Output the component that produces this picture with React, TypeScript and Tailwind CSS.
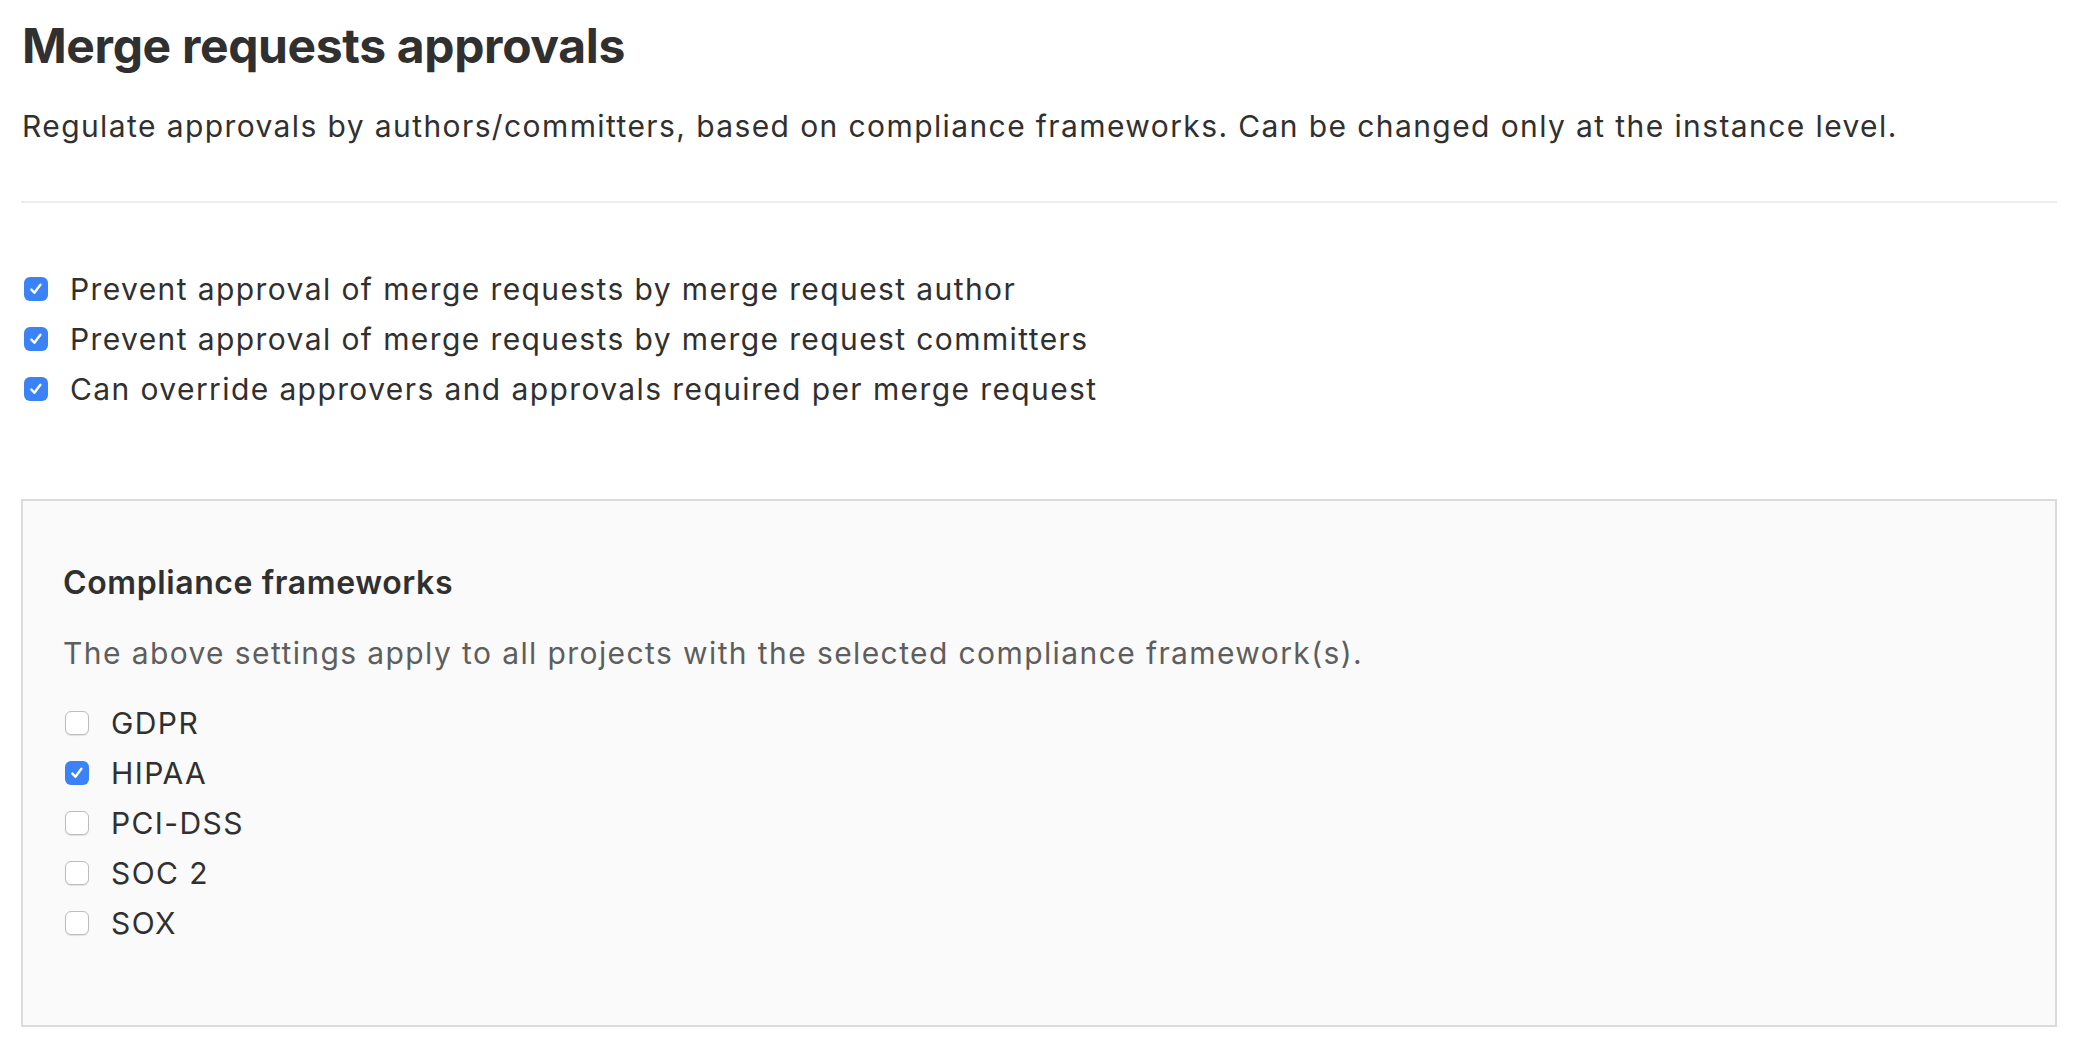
import React from 'react';

const frameworks = [
  { name: 'GDPR', checked: false },
  { name: 'HIPAA', checked: true },
  { name: 'PCI-DSS', checked: false },
  { name: 'SOC 2', checked: false },
  { name: 'SOX', checked: false },
];

const rules = [
  'Prevent approval of merge requests by merge request author',
  'Prevent approval of merge requests by merge request committers',
  'Can override approvers and approvals required per merge request',
];

function Checkbox({ checked }: { checked: boolean }) {
  if (checked) {
    return (
      <span className="w-[24px] h-[24px] shrink-0 rounded-[6px] bg-[#3a82f6] flex items-center justify-center">
        <svg width="16" height="16" viewBox="0 0 16 16" fill="none">
          <path d="M3.4 8.6 L6.4 11.8 L12.4 3.8" stroke="white" strokeWidth="2.4" strokeLinecap="round" strokeLinejoin="round" />
        </svg>
      </span>
    );
  }
  return (
    <span className="w-[24px] h-[24px] shrink-0 rounded-[6px] bg-white border border-[#bdbdbd] shadow-[0_1px_1px_rgba(0,0,0,0.1)]" />
  );
}

function CheckRow({ label, checked }: { label: string; checked: boolean }) {
  return (
    <label className="flex items-center h-[50px] text-[30px] leading-[50px] tracking-[1.4px] text-[#303030]">
      <Checkbox checked={checked} />
      <span className="ml-[22px]">{label}</span>
    </label>
  );
}

export default function App() {
  return (
    <div className="min-h-screen bg-white pl-[21px] pr-[37px] pt-[18px] font-['Inter',sans-serif] text-[#303030]">
      {/* Header */}
      <h1 className="text-[48px] leading-[56px] font-bold tracking-[-0.35px] ml-[1px]">
        Merge requests approvals
      </h1>
      <p className="mt-[32px] text-[30px] leading-[40px] tracking-[1.4px] ml-[1px]">
        Regulate approvals by authors/committers, based on compliance frameworks. Can be changed only at the instance level.
      </p>

      <div className="mt-[55px] h-[2px] bg-[#ececec]" />

      {/* Approval rules */}
      <div className="mt-[61px] ml-[3px]">
        {rules.map((r) => (
          <CheckRow key={r} label={r} checked />
        ))}
      </div>

      {/* Compliance frameworks */}
      <div className="mt-[85px] border-2 border-[#dbdbdb] bg-[#fafafa] pl-[40px] pt-[62px] pb-[77px]">
        <h3 className="text-[32px] leading-[40px] font-semibold tracking-[0.6px]">Compliance frameworks</h3>
        <p className="mt-[30px] text-[30px] leading-[40px] tracking-[1.4px] text-[#5e5e5e]">
          The above settings apply to all projects with the selected compliance framework(s).
        </p>
        <div className="mt-[25px] ml-[2px]">
          {frameworks.map((f) => (
            <CheckRow key={f.name} label={f.name} checked={f.checked} />
          ))}
        </div>
      </div>
    </div>
  );
}
